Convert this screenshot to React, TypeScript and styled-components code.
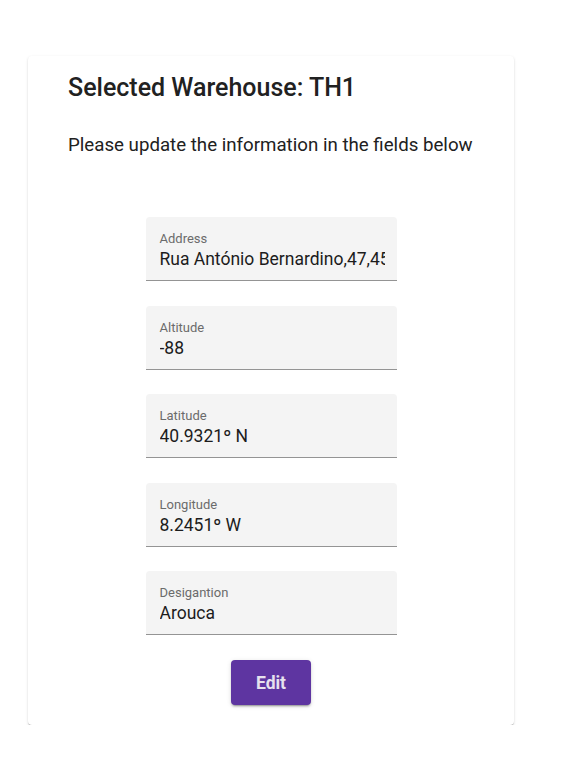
import * as React from 'react';
import styled, { createGlobalStyle } from 'styled-components';

const GlobalStyle = createGlobalStyle`
    body {
        margin: 0;
        background: #ffffff;
        font-family: Roboto, "Liberation Sans", sans-serif;
        color: rgba(0, 0, 0, 0.87);
    }
`;

const Page = styled.div`
    padding: 56px 0 0 28px;
`;

const Card = styled.div`
    width: 486px;
    height: 669px;
    box-sizing: border-box;
    padding: 16px 40px 20px;
    background: #fff;
    border-radius: 4px;
    box-shadow: 0 2px 1px -1px rgba(0, 0, 0, 0.2), 0 1px 1px 0 rgba(0, 0, 0, 0.14),
        0 1px 3px 0 rgba(0, 0, 0, 0.12);
    display: flex;
    flex-direction: column;
`;

const Title = styled.h2`
    margin: 0;
    font-size: 25px;
    font-weight: 500;
    line-height: 32px;
    color: #212121;
`;

const Subtitle = styled.p`
    margin: 27px 0 0;
    font-size: 18.7px;
    font-weight: 400;
    line-height: 28px;
    color: #212121;
`;

const Fields = styled.div`
    margin-top: 58px;
    display: flex;
    flex-direction: column;
    align-items: center;
    gap: 24.5px;
`;

const Field = styled.div`
    width: 251px;
    height: 64px;
    box-sizing: border-box;
    padding: 14px 12px 0 14px;
    background: #f4f4f4;
    border-radius: 4px 4px 0 0;
    border-bottom: 1px solid #949494;
    overflow: hidden;
`;

const Label = styled.div`
    font-size: 13px;
    line-height: 15px;
    color: #6b6b6b;
`;

const Value = styled.div`
    margin-top: 2px;
    font-size: 17.5px;
    line-height: 22px;
    color: #1c1c1c;
    white-space: nowrap;
    overflow: hidden;
`;

const Button = styled.button`
    align-self: center;
    flex-shrink: 0;
    margin-top: 25px;
    width: 80px;
    height: 45px;
    border: none;
    border-radius: 4px;
    background: #5e35a1;
    color: #e6e1ee;
    font-family: Roboto, "Liberation Sans", sans-serif;
    font-size: 17.5px;
    font-weight: 700;
    cursor: pointer;
    box-shadow: 0 3px 1px -2px rgba(0, 0, 0, 0.2), 0 2px 2px 0 rgba(0, 0, 0, 0.14),
        0 1px 5px 0 rgba(0, 0, 0, 0.12);
`;

const fields = [
    { label: 'Address', value: 'Rua António Bernardino,47,4535' },
    { label: 'Altitude', value: '-88' },
    { label: 'Latitude', value: '40.9321º N' },
    { label: 'Longitude', value: '8.2451º W' },
    { label: 'Desigantion', value: 'Arouca' }
];

export default function App() {
    return (
        <Page>
            <GlobalStyle />
            <Card>
                <Title>Selected Warehouse: TH1</Title>
                <Subtitle>Please update the information in the fields below</Subtitle>
                <Fields>
                    {fields.map(f => (
                        <Field key={f.label}>
                            <Label>{f.label}</Label>
                            <Value>{f.value}</Value>
                        </Field>
                    ))}
                </Fields>
                <Button>Edit</Button>
            </Card>
        </Page>
    );
}
